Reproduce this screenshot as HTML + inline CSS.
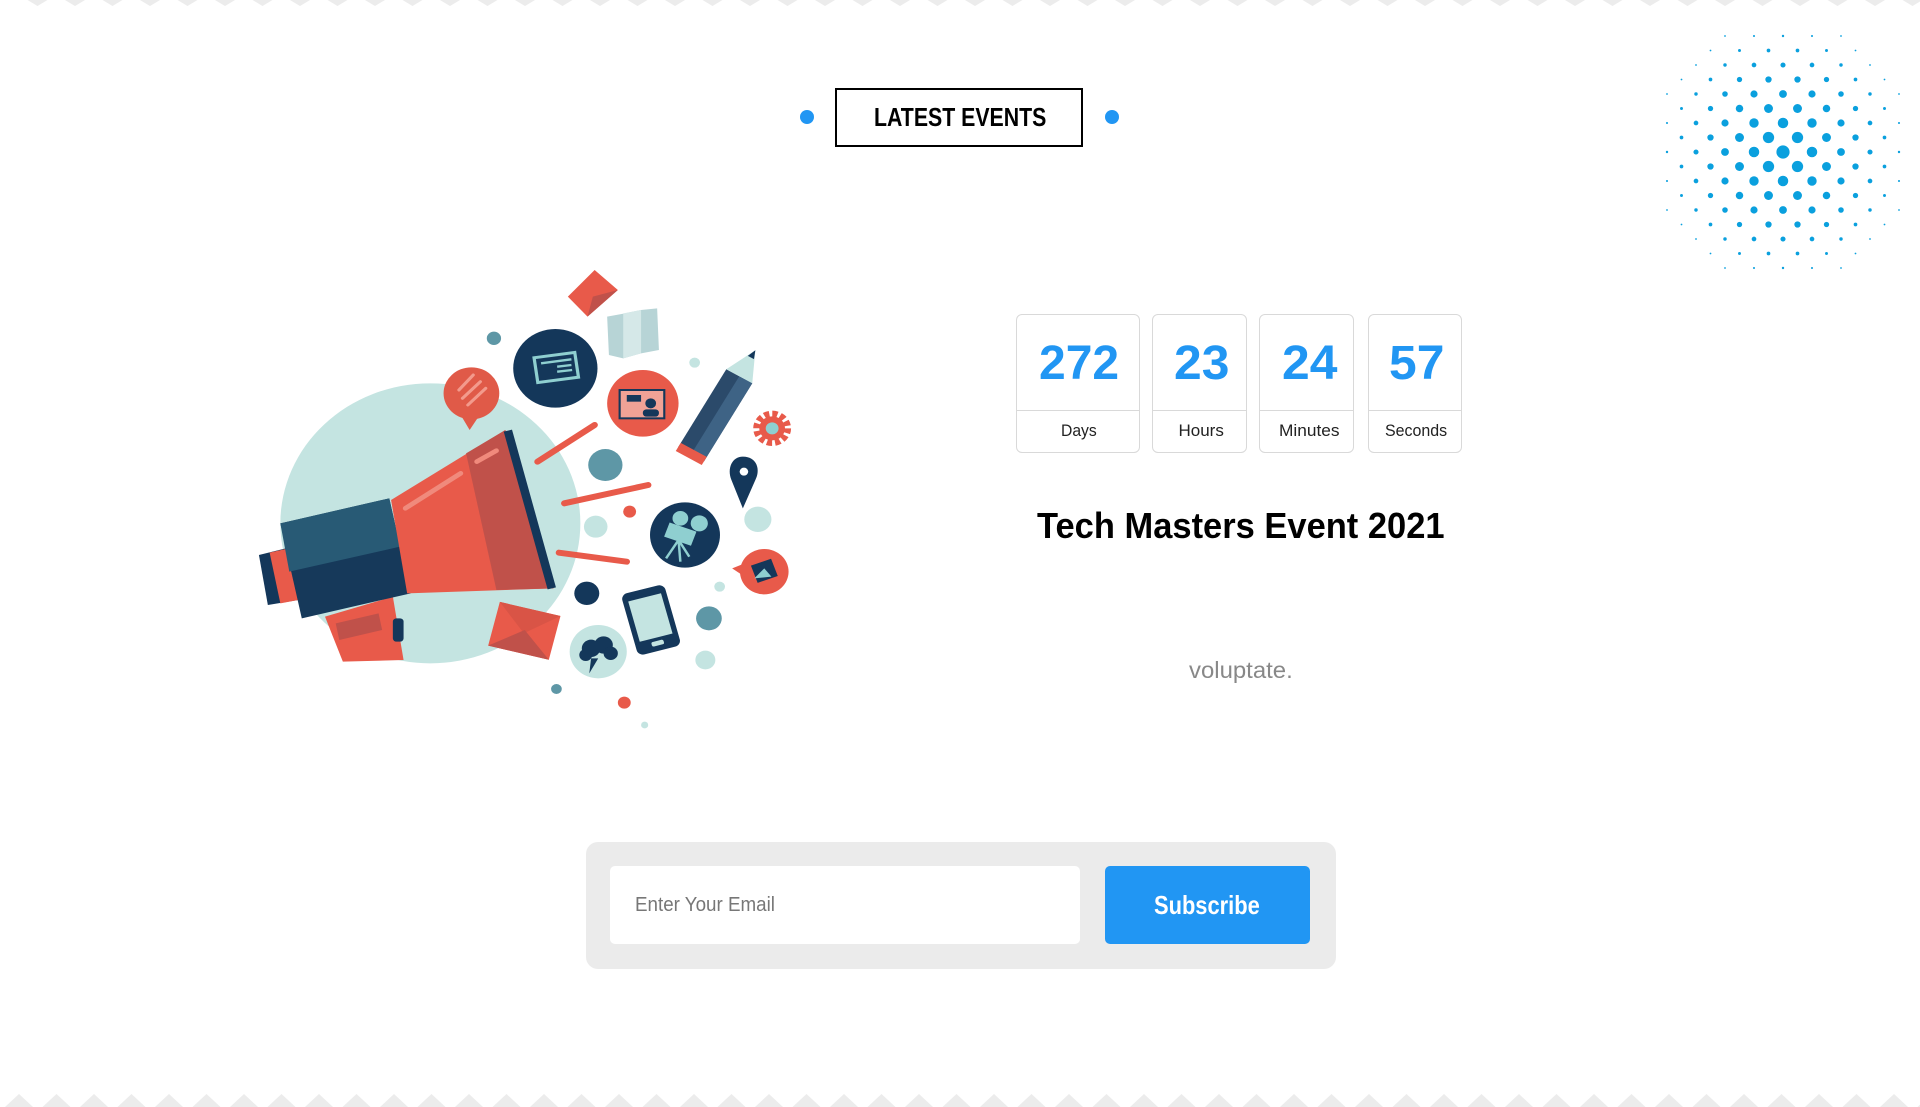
<!DOCTYPE html>
<html><head><meta charset="utf-8">
<style>
html,body{margin:0;padding:0;background:#fff;}
body{width:1920px;height:1107px;position:relative;overflow:hidden;font-family:"Liberation Sans",sans-serif;}
.abs{position:absolute;}
.fit{position:absolute;white-space:nowrap;transform-origin:0 0;}
.box{position:absolute;border:1px solid #d9d9d9;border-radius:6px;box-sizing:border-box;background:#fff;}
.box .div{position:absolute;left:0;right:0;top:95px;border-top:1px solid #d9d9d9;}
</style></head><body>

<svg class="abs" style="left:0;top:0" width="1920" height="1107">
  <g id="zz" fill="#ececec"></g>
</svg>

<!-- heading -->
<div class="abs" style="left:800px;top:110px;width:14px;height:14px;border-radius:50%;background:#2196f3"></div>
<div class="abs" style="left:1105px;top:110px;width:14px;height:14px;border-radius:50%;background:#2196f3"></div>
<div class="abs" style="left:835px;top:88px;width:248px;height:59px;border:2.5px solid #000;box-sizing:border-box"></div>
<div class="fit" data-x="874" data-w="172" style="top:102px;font-size:26px;font-weight:bold;color:#000">LATEST EVENTS</div>

<!-- dots -->
<svg class="abs" style="left:0;top:0" width="1920" height="300"><g id="dots" fill="#0aa0de"></g></svg>

<!-- countdown -->
<div class="box" style="left:1016px;top:314px;width:124px;height:139px"><div class="div"></div></div>
<div class="box" style="left:1152px;top:314px;width:95px;height:139px"><div class="div"></div></div>
<div class="box" style="left:1259px;top:314px;width:95px;height:139px"><div class="div"></div></div>
<div class="box" style="left:1368px;top:314px;width:94px;height:139px"><div class="div"></div></div>

<div class="fit" data-cx="1079" data-w="80" style="top:336px;font-size:48px;font-weight:bold;color:#2196f3">272</div>
<div class="fit" data-cx="1201" data-w="55" style="top:336px;font-size:48px;font-weight:bold;color:#2196f3">23</div>
<div class="fit" data-cx="1309" data-w="55" style="top:336px;font-size:48px;font-weight:bold;color:#2196f3">24</div>
<div class="fit" data-cx="1416" data-w="55" style="top:336px;font-size:48px;font-weight:bold;color:#2196f3">57</div>

<div class="fit" data-cx="1079" data-w="36" style="top:421px;font-size:17px;color:#222">Days</div>
<div class="fit" data-cx="1201" data-w="45" style="top:421px;font-size:17px;color:#222">Hours</div>
<div class="fit" data-cx="1309" data-w="61" style="top:421px;font-size:17px;color:#222">Minutes</div>
<div class="fit" data-cx="1416" data-w="62" style="top:421px;font-size:17px;color:#222">Seconds</div>

<div class="fit" data-cx="1241" data-w="408" style="top:505px;font-size:36px;font-weight:bold;color:#000">Tech Masters Event 2021</div>
<div class="fit" data-cx="1241" data-w="104" style="top:657px;font-size:23px;color:#888">voluptate.</div>

<!-- subscribe -->
<div class="abs" style="left:586px;top:842px;width:750px;height:127px;background:#ebebeb;border-radius:12px"></div>
<div class="abs" style="left:610px;top:866px;width:470px;height:78px;background:#fff;border-radius:5px"></div>
<div class="fit" data-x="635" data-w="140" style="top:894px;font-size:20px;color:#777">Enter Your Email</div>
<div class="abs" style="left:1105px;top:866px;width:205px;height:78px;background:#2196f3;border-radius:5px"></div>
<div class="fit" data-cx="1207" data-w="106" style="top:890px;font-size:26px;font-weight:bold;color:#fff">Subscribe</div>

<!-- illustration -->
<svg class="abs" style="left:250px;top:260px" width="550" height="480" viewBox="0 0 1540 1440" preserveAspectRatio="none">
  <circle cx="505" cy="790" r="420" fill="#c4e4e1"/>
  <g stroke="#e85a4a" stroke-width="18" stroke-linecap="round">
    <line x1="805" y1="605" x2="965" y2="495"/>
    <line x1="880" y1="730" x2="1115" y2="675"/>
    <line x1="865" y1="878" x2="1055" y2="905"/>
  </g>
  <polygon points="210,1070 400,1010 430,1200 260,1205" fill="#e85a4a"/>
  <polygon points="240,1090 360,1060 370,1110 250,1140" fill="#c0514a"/>
  <rect x="400" y="1075" width="30" height="70" rx="10" fill="#14375a"/>
  <polygon points="25,885 100,865 135,1020 50,1035" fill="#14375a"/>
  <polygon points="55,878 100,867 135,1020 85,1030" fill="#e85a4a"/>
  <polygon points="85,790 390,715 450,1000 145,1075" fill="#16395a"/>
  <polygon points="85,790 390,715 420,860 110,935" fill="#285a75"/>
  <polygon points="395,720 715,510 850,985 440,1000" fill="#e85a4a"/>
  <polygon points="605,580 715,510 850,985 690,990" fill="#c0514a"/>
  <line x1="722" y1="512" x2="845" y2="985" stroke="#14375a" stroke-width="24"/>
  <line x1="435" y1="745" x2="590" y2="640" stroke="#f08a7c" stroke-width="14" stroke-linecap="round"/>
  <line x1="635" y1="605" x2="690" y2="572" stroke="#f08a7c" stroke-width="14" stroke-linecap="round"/>
  <circle cx="620" cy="400" r="78" fill="#e05a48"/>
  <polygon points="590,465 640,470 615,510" fill="#e05a48"/>
  <g stroke="#f39a8c" stroke-width="9" stroke-linecap="round"><line x1="585" y1="390" x2="625" y2="345"/><line x1="595" y1="415" x2="645" y2="365"/><line x1="610" y1="435" x2="660" y2="385"/></g>
  <circle cx="855" cy="325" r="118" fill="#14375a"/>
  <rect x="800" y="285" width="115" height="75" fill="none" stroke="#8fcfd0" stroke-width="9" transform="rotate(-8 857 322)"/>
  <g stroke="#8fcfd0" stroke-width="7"><line x1="815" y1="310" x2="900" y2="298"/><line x1="860" y1="320" x2="900" y2="315"/><line x1="860" y1="335" x2="902" y2="330"/></g>
  <circle cx="1100" cy="430" r="100" fill="#e85a4a"/>
  <rect x="1035" y="390" width="125" height="85" fill="#f0a296" stroke="#14375a" stroke-width="6"/>
  <circle cx="1122" cy="430" r="15" fill="#14375a"/><rect x="1100" y="448" width="45" height="22" rx="10" fill="#14375a"/>
  <rect x="1055" y="405" width="40" height="20" fill="#14375a"/>
  <polygon points="890,110 965,30 1030,90 945,170" fill="#e85a4a"/>
  <polygon points="960,110 1030,90 945,170" fill="#c0514a"/>
  <polygon points="1000,170 1050,160 1095,150 1140,145 1145,270 1095,280 1045,295 1005,285" fill="#b7d4d6"/>
  <polygon points="1045,160 1095,150 1095,280 1045,295" fill="#d5e8e8"/>
  <circle cx="683" cy="235" r="20" fill="#5e97a6"/>
  <circle cx="1245" cy="308" r="15" fill="#c4e4e1"/>
  <circle cx="995" cy="615" r="48" fill="#5e97a6"/>
  <circle cx="1063" cy="755" r="18" fill="#e85a4a"/>
  <circle cx="968" cy="800" r="33" fill="#c4e4e1"/>
  <circle cx="1422" cy="778" r="38" fill="#c4e4e1"/>
  <circle cx="1315" cy="980" r="15" fill="#c4e4e1"/>
  <circle cx="943" cy="1000" r="35" fill="#14375a"/>
  <circle cx="1285" cy="1075" r="36" fill="#5e97a6"/>
  <circle cx="1275" cy="1200" r="28" fill="#c4e4e1"/>
  <circle cx="858" cy="1287" r="15" fill="#5e97a6"/>
  <circle cx="1048" cy="1328" r="18" fill="#e85a4a"/>
  <circle cx="1105" cy="1395" r="10" fill="#c4e4e1"/>
  <g transform="rotate(30 1300 470)">
    <rect x="1258" y="330" width="84" height="270" fill="#2b4a6a"/>
    <rect x="1300" y="330" width="42" height="270" fill="#3e6385"/>
    <rect x="1258" y="585" width="84" height="28" fill="#e85a4a"/>
    <polygon points="1258,330 1342,330 1300,240" fill="#c4e4e1"/>
    <polygon points="1290,265 1310,265 1300,240" fill="#14375a"/>
  </g>
  <circle cx="1462" cy="505" r="42" fill="none" stroke="#e85a4a" stroke-width="22" stroke-dasharray="14 8"/>
  <circle cx="1462" cy="505" r="36" fill="#e85a4a"/>
  <circle cx="1462" cy="505" r="18" fill="#8fcfd0"/>
  <path d="M1380,590 C1420,590 1430,630 1415,660 L1380,745 L1348,660 C1335,625 1350,590 1380,590Z" fill="#14375a"/>
  <circle cx="1383" cy="635" r="12" fill="#fff"/>
  <circle cx="1218" cy="825" r="98" fill="#14375a"/>
  <circle cx="1205" cy="775" r="22" fill="#8fcfd0"/><circle cx="1258" cy="790" r="24" fill="#8fcfd0"/>
  <rect x="1165" y="800" width="80" height="45" fill="#8fcfd0" transform="rotate(20 1205 822)"/>
  <g stroke="#8fcfd0" stroke-width="7"><line x1="1200" y1="840" x2="1165" y2="895"/><line x1="1200" y1="840" x2="1205" y2="905"/><line x1="1200" y1="840" x2="1230" y2="890"/></g>
  <circle cx="1440" cy="935" r="68" fill="#e85a4a"/>
  <polygon points="1350,925 1385,910 1385,950" fill="#e85a4a"/>
  <rect x="1410" y="905" width="60" height="55" fill="#14375a" transform="rotate(-20 1440 932)"/>
  <polygon points="1412,955 1440,925 1460,950" fill="#8fcfd0"/>
  <g transform="rotate(-15 1122 1078)">
    <rect x="1060" y="985" width="125" height="190" rx="18" fill="#14375a"/>
    <rect x="1075" y="1010" width="95" height="125" fill="#c4e4e1"/>
    <rect x="1105" y="1145" width="35" height="14" rx="5" fill="#c4e4e1"/>
  </g>
  <g transform="rotate(14 768 1115)">
    <rect x="680" y="1045" width="175" height="135" fill="#e85a4a"/>
    <polygon points="680,1045 855,1045 768,1120" fill="#d95446"/>
    <polygon points="680,1180 768,1110 855,1180" fill="#c0514a"/>
  </g>
  <circle cx="975" cy="1175" r="80" fill="#c4e4e1"/>
  <circle cx="955" cy="1165" r="26" fill="#14375a"/><circle cx="990" cy="1155" r="26" fill="#14375a"/><circle cx="1010" cy="1180" r="20" fill="#14375a"/><circle cx="940" cy="1185" r="18" fill="#14375a"/>
  <polygon points="955,1195 975,1195 950,1240" fill="#14375a"/>
</svg>

<script>
(function(){
  var g=document.getElementById('zz'),s='';
  for(var x=0;x<1960;x+=37.5){
    s+='<polygon points="'+(x+27.5)+',0 '+(x+47.5)+',0 '+(x+37.5)+',6"/>';
    s+='<polygon points="'+(x+5)+',1107 '+(x+33)+',1107 '+(x+19)+',1094"/>';
  }
  g.innerHTML=s;
  var d=document.getElementById('dots'),t='',cx=1783,cy=152,u=14.5;
  for(var j=-8;j<=8;j++)for(var i=-8;i<=8;i++){
    if((i+j)%2!==0)continue;
    var dd=Math.sqrt(i*i+j*j);
    if(dd>9.0)continue;
    var r=Math.max(0.9,6.6*(1-dd/9.8));
    t+='<circle cx="'+(cx+i*u)+'" cy="'+(cy+j*u)+'" r="'+r.toFixed(2)+'"/>';
  }
  d.innerHTML=t;
  var els=document.querySelectorAll('.fit');
  for(var k=0;k<els.length;k++){
    var e=els[k],w=e.scrollWidth,tw=+e.getAttribute('data-w'),sc=tw/w;
    e.style.transform='scaleX('+sc+')';
    if(e.hasAttribute('data-cx'))e.style.left=(+e.getAttribute('data-cx')-tw/2)+'px';
    else e.style.left=e.getAttribute('data-x')+'px';
  }
})();
</script>
</body></html>
